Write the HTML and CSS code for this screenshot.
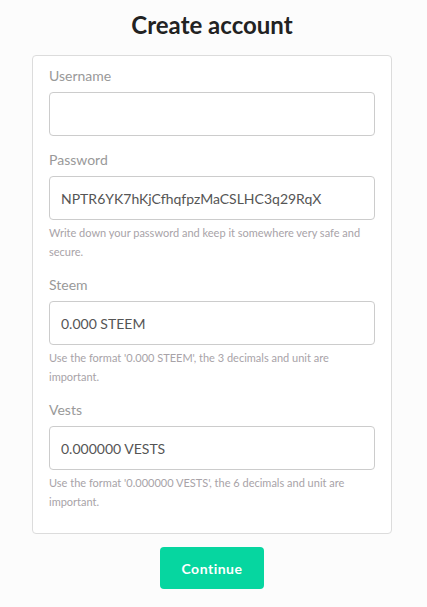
FILE: index.html
```html
<!DOCTYPE html>
<html>
<head>
<meta charset="utf-8">
<link rel="stylesheet" href="styles.css">
</head>
<body>
<div class="page">
  <h1 class="title">Create account</h1>
  <form class="card">
    <div class="field">
      <label class="label">Username</label>
      <input class="input" type="text" value="">
    </div>
    <div class="field">
      <label class="label">Password</label>
      <input class="input" type="text" value="NPTR6YK7hKjCfhqfpzMaCSLHC3q29RqX">
      <p class="help">Write down your password and keep it somewhere very safe and secure.</p>
    </div>
    <div class="field">
      <label class="label">Steem</label>
      <input class="input" type="text" value="0.000 STEEM">
      <p class="help">Use the format '0.000 STEEM', the 3 decimals and unit are important.</p>
    </div>
    <div class="field">
      <label class="label">Vests</label>
      <input class="input" type="text" value="0.000000 VESTS">
      <p class="help">Use the format '0.000000 VESTS', the 6 decimals and unit are important.</p>
    </div>
  </form>
  <div class="actions">
    <button class="btn" type="button">Continue</button>
  </div>
</div>
</body>
</html>
```
FILE: styles.css
```css
html, body {
  margin: 0;
  padding: 0;
  background: #fcfcfc;
}
body {
  font-family: Lato, "Open Sans", sans-serif;
  color: #333;
}
.page {
  width: 360px;
  padding-top: 8px;
  margin-left: 32px;
}
.title {
  margin: 0 0 13px;
  text-align: center;
  font-size: 24px;
  line-height: 34px;
  font-weight: 700;
  color: #222;
}
.card {
  background: #fff;
  border: 1px solid #dcdcdc;
  border-radius: 4px;
  padding: 10px 16px 22px;
  display: flex;
  flex-direction: column;
  gap: 14px;
}
.field {
  display: flex;
  flex-direction: column;
}
.label {
  font-size: 14px;
  line-height: 20px;
  color: #999;
  margin-bottom: 6px;
}
.input {
  height: 44px;
  box-sizing: border-box;
  border: 1px solid #ccc;
  border-radius: 4px;
  padding: 0 11px;
  font-family: Lato, sans-serif;
  font-size: 14px;
  color: #555;
  background: #fff;
  outline: none;
}
.help {
  margin: 3px 0 0;
  font-size: 11px;
  line-height: 19px;
  color: #a8a3a8;
}
.actions {
  display: flex;
  justify-content: center;
  padding-top: 13px;
}
.btn {
  width: 104px;
  height: 42px;
  border: none;
  border-radius: 4px;
  background: #06d6a0;
  color: #fff;
  font-family: Lato, sans-serif;
  font-weight: 700;
  font-size: 14px;
  letter-spacing: 0.5px;
}
```
